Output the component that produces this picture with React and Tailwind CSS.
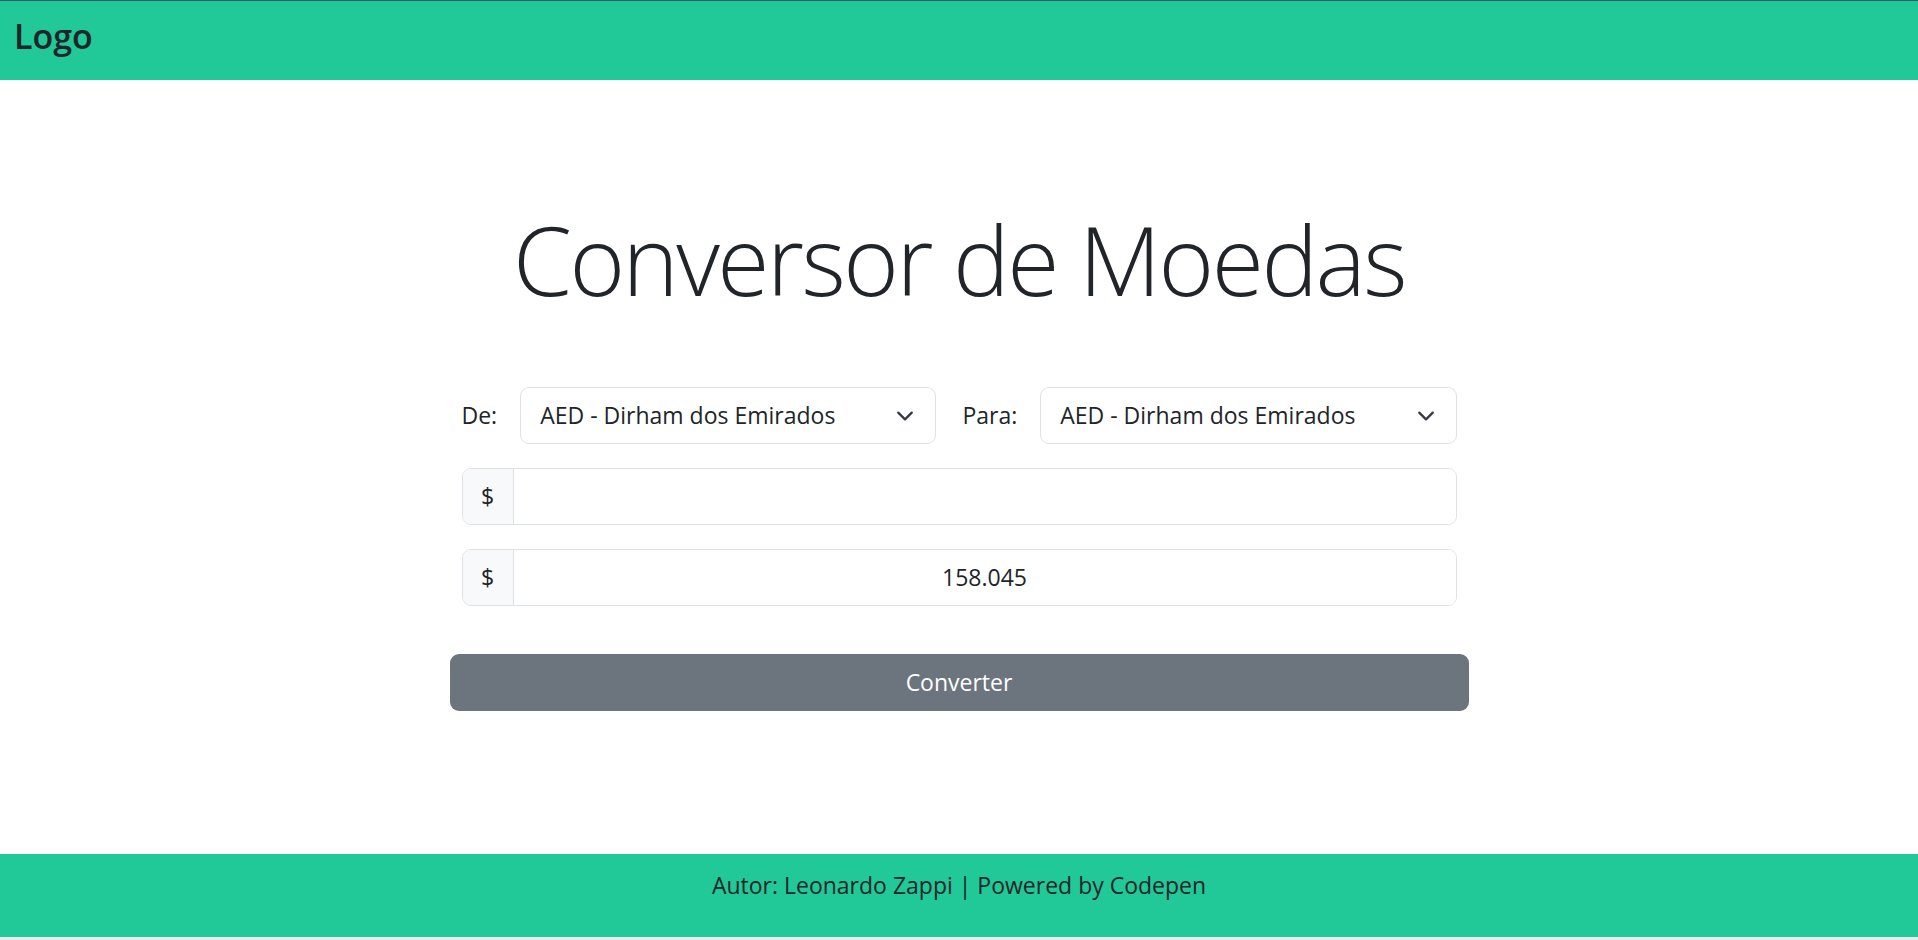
import React from 'react';

const Chevron = () => (
  <svg width="24" height="18" viewBox="0 0 16 16" fill="none" className="shrink-0">
    <path d="m2 5 6 6 6-6" stroke="#343a40" strokeWidth="2" strokeLinecap="round" strokeLinejoin="round" />
  </svg>
);

const CurrencySelect = ({ value }) => (
  <div className="flex-1 h-[57px] flex items-center justify-between border border-[#dee2e6] rounded-[9px] pl-[19px] pr-[18px] bg-white">
    <span>{value}</span>
    <Chevron />
  </div>
);

const MoneyInput = ({ value }) => (
  <div className="flex h-[57px] border border-[#dee2e6] rounded-[9px] overflow-hidden">
    <div className="w-[51px] flex items-center justify-center bg-[#f8f9fa] border-r border-[#dee2e6]">$</div>
    <div className="flex-1 flex items-center justify-center bg-white">{value}</div>
  </div>
);

export default function App() {
  return (
    <div className="min-h-screen flex flex-col bg-white text-[#212529] text-[23px] leading-[1.5] font-['Open_Sans',sans-serif]">
      <header className="h-[80px] shrink-0 bg-[#20c997] border-t border-[#3b5878]">
        <div className="pl-[14px] pt-[18px] text-[34px] leading-[34px] font-semibold">Logo</div>
      </header>

      <main className="flex-1">
        <div className="w-[1019px] mx-auto">
          <h1 className="mt-[122px] text-center text-[95px] leading-[1.2] font-light tracking-[-2.5px]">Conversor de Moedas</h1>

          <div className="px-[12px]">
            <div className="mt-[71px] flex items-center">
              <label className="mr-[23px]">De:</label>
              <CurrencySelect value="AED - Dirham dos Emirados" />
              <label className="ml-[26px] mr-[23px]">Para:</label>
              <CurrencySelect value="AED - Dirham dos Emirados" />
            </div>

            <div className="mt-[24px]">
              <MoneyInput value="" />
            </div>
            <div className="mt-[24px]">
              <MoneyInput value="158.045" />
            </div>
          </div>

          <button className="mt-[48px] w-full h-[57px] rounded-[9px] bg-[#6c757d] text-white">
            Converter
          </button>
        </div>
      </main>

      <footer className="h-[83px] shrink-0 bg-[#20c997] pt-[14px] text-center">
        Autor: Leonardo Zappi | Powered by Codepen
      </footer>
      <div className="h-[3px] shrink-0 bg-[#e9ecef]" />
    </div>
  );
}
